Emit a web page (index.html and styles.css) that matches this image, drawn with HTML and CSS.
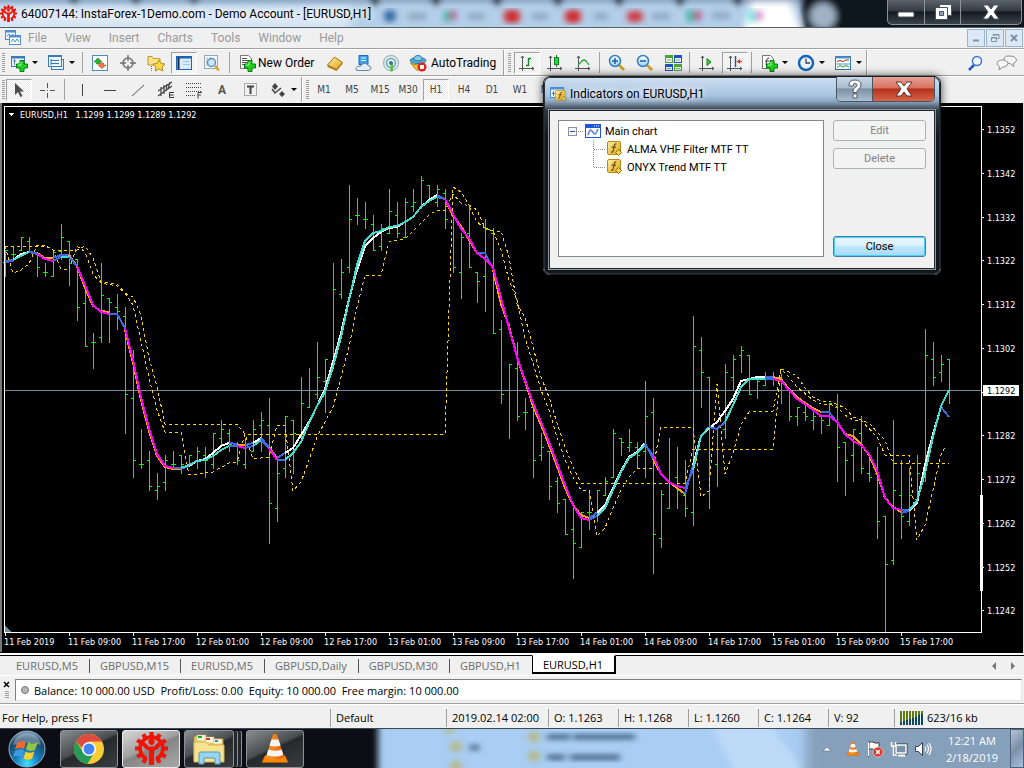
FILE: index.html
```
<!DOCTYPE html>
<html lang="en">

<head>
    <meta charset="UTF-8">
    <title>64007144: InstaForex-1Demo.com - Demo Account - [EURUSD,H1]</title>
    <link rel="stylesheet" href="styles.css">
</head>

<body>

    <!-- shared icons -->
    <svg class="defs" width="0" height="0">
        <defs>
            <filter id="soft"><feGaussianBlur stdDeviation="3" /></filter>
            <filter id="soft2"><feGaussianBlur stdDeviation="6" /></filter>
            <linearGradient id="gold" x1="0" y1="0" x2="1" y2="1">
                <stop offset="0" stop-color="#fff0a0" />
                <stop offset="1" stop-color="#dba21c" />
            </linearGradient>
            <linearGradient id="cone" x1="0" x2="1">
                <stop offset="0" stop-color="#ff9d2c" />
                <stop offset="1" stop-color="#e06000" />
            </linearGradient>
            <linearGradient id="lens" x1="0" y1="0" x2="0" y2="1">
                <stop offset="0" stop-color="#ffffff" />
                <stop offset="1" stop-color="#9fd0f2" />
            </linearGradient>
            <radialGradient id="orb" cx=".5" cy=".9" r=".9">
                <stop offset="0" stop-color="#3fe4ff" />
                <stop offset=".35" stop-color="#1b7fc0" />
                <stop offset=".75" stop-color="#1d4668" />
                <stop offset="1" stop-color="#7e9fb8" />
            </radialGradient>
            <symbol id="gear" viewBox="0 0 32 32">
                <g fill="none" stroke="#ee1506">
                    <path d="M16 0v5M16 27v5M0 16h5M27 16h5M8 2.100l2.500 4.400M24 2.100l-2.500 4.400M2.100 8l4.400 2.500M29.900 8l-4.400 2.500M2.100 24l4.400-2.500M29.900 24l-4.400-2.500M8 29.900l2.500-4.400M24 29.900l-2.500-4.400" stroke-width="4" />
                    <path d="M11.500 26A11 11 0 1 1 20.500 26" stroke-width="3.600" />
                </g>
                <circle cx="16" cy="9.500" r="3" fill="#ee1506" />
                <path d="M6 9q5 1 7 5h6q2-4 7-5-1 7-7.500 9V32h-5V18Q7 16 6 9z" fill="#ee1506" />
            </symbol>
            <symbol id="plus" viewBox="0 0 12 12">
                <path d="M4 .5h4V4h3.500v4H8v3.500H4V8H.5V4H4z" fill="#1fd21f" stroke="#087a10" />
                <path d="M5 2v3H2" stroke="#9cff8c" fill="none" />
            </symbol>
            <symbol id="func" viewBox="0 0 16 16">
                <rect x=".5" y=".5" width="13" height="13" rx="1.500" fill="url(#gold)" stroke="#b98a10" />
                <path d="M9.500 3Q7.500 2.500 7.200 5L6.300 9.500Q6 11.500 4 11M4.500 6.200h4.500" fill="none" stroke="#6b4c00" stroke-width="1.200" />
                <path d="M11.500 8.500l3 3-3 3-3-3z" fill="#f7d552" stroke="#8e6a08" />
            </symbol>
            <symbol id="vlc" viewBox="0 0 28 30">
                <path d="M4 22h20l3 7H1z" fill="#f58a0c" stroke="#c05a00" stroke-width=".6" />
                <path d="M12 1q2-1.500 4 0l7 23q-9 4-18 0z" fill="url(#cone)" />
                <path d="M10.500 6h7l2 6q-5 2-11 0z" fill="#f4f4f4" />
                <path d="M7.300 16q6.700 2.500 13.400 0l1.700 5.500q-8.400 3-16.800 0z" fill="#f4f4f4" />
            </symbol>
        </defs>
    </svg>

    <!-- title bar -->
    <header class="titlebar">
        <svg class="glass" viewBox="0 0 1024 27" preserveAspectRatio="none">
            <rect width="1024" height="27" fill="#b4cfe9" />
            <rect x="-10" y="6" width="360" height="26" fill="#d9e7f5" filter="url(#soft2)" />
            <g filter="url(#soft)">
                <path d="M-10-4h830v6H-10z" fill="#7e98b5" />
                <path d="M66-4l8 8 8-8zM128-4l8 8 8-8zM186-4l8 8 8-8zM367-4l8 10 8-10zM428-4l8 10 8-10zM489-4l8 10 8-10zM550-4l8 10 8-10zM611-4l8 10 8-10zM672-4l8 10 8-10zM730-4l8 10 8-10z" fill="#101820" />
                <path d="M800-8h260v60H806z" fill="#0d141b" />
                <path d="M742 34L752 2h38l12 32z" fill="#fff" />
                <g fill="#8498b0">
                    <path d="M408 14h18v5h-18zM468 14h17v5h-17zM532 14h16v5h-16zM594 14h14v5h-14zM652 14h18v5h-18zM712 13h18v5h-18z" />
                </g>
                <circle cx="823" cy="16" r="13" fill="#9fb3c6" />
            </g>
            <g filter="url(#soft)">
                <circle cx="390" cy="16" r="6" fill="#285b9e" />
                <path d="M444 11h6v11h-6z" fill="#35b3a4" />
                <path d="M450 11h6v9h-6z" fill="#b44c82" />
                <rect x="504" y="10" width="16" height="13" rx="5" fill="#d0282a" />
                <rect x="565" y="10" width="16" height="13" rx="5" fill="#d0282a" />
                <rect x="627" y="11" width="16" height="11" rx="5" fill="#cf343c" />
                <path d="M687 10h7v12h-7z" fill="#35b3a4" />
                <path d="M694 11h7v9h-7z" fill="#b8487c" />
                <path d="M749 10h6v12h-6z" fill="#4fe0dc" />
                <path d="M756 11h6v9h-6z" fill="#d470c8" />
            </g>
        </svg>
        <svg class="app-icon" width="17" height="17"><use href="#gear" /></svg>
        <h1>64007144: InstaForex-1Demo.com - Demo Account - [EURUSD,H1]</h1>
        <div class="window-btns">
            <button class="wb" aria-label="Minimize"><svg width="20" height="18"><rect x="2" y="9" width="16" height="5" rx="1" fill="#fff" stroke="#4a5360" /></svg></button>
            <button class="wb" aria-label="Restore"><svg width="20" height="18" fill="#fff" stroke="#4a5360"><path d="M6.500 1.500h12v11h-12z" /><path d="M2.500 4.500h12v12h-12z" /><path d="M6.500 8.500h4v4h-4z" fill="#8fa0b2" /></svg></button>
            <button class="wb wide" aria-label="Close"><svg width="20" height="18"><path d="M2 2h5l3 4 3-4h5l-5 7 5 7h-5l-3-4-3 4H2l5-7z" fill="#fff" stroke="#4a5360" /></svg></button>
        </div>
    </header>

    <!-- menu -->
    <nav class="menubar">
        <svg class="menu-icon" width="16" height="16" fill="none" stroke="#4f8fd0"><rect x=".5" y=".5" width="10" height="9" fill="#e8f4ff" /><path d="M0 1.500h11" stroke-width="2" /><path d="M2 6l2-2 2 3 2-3" /><rect x="4.500" y="5.500" width="11" height="9" fill="#fff" /><path d="M4 6.500h12" stroke-width="2" /><path d="M6 12l2-3 2 3 2-3 2 3" /></svg>
        <button>File</button>
        <button>View</button>
        <button>Insert</button>
        <button>Charts</button>
        <button>Tools</button>
        <button>Window</button>
        <button>Help</button>
        <div class="mdi-btns">
            <button aria-label="Minimize chart"><svg width="10" height="10"><path d="M2 7.500h6" stroke="#8291a3" stroke-width="2" /></svg></button>
            <button aria-label="Restore chart"><svg width="10" height="10" fill="none" stroke="#8291a3"><path d="M3 3V1.500h6v4H7.500M3 2h6M1.500 4.500h5v4h-5zM1 5h6" /></svg></button>
            <button aria-label="Close chart"><svg width="10" height="10"><path d="M2 2l6 6M8 2L2 8" stroke="#8291a3" stroke-width="2" /></svg></button>
        </div>
    </nav>

    <!-- standard toolbar -->
    <div class="toolbar">
        <div class="group first">
            <i class="grip"></i>
            <button class="tb drop" aria-label="New chart"><svg width="18" height="18"><rect x="1.500" y="2.500" width="13" height="10" fill="#eaf5ff" stroke="#3d7ab8" /><path d="M1 3.500h14" stroke="#3d7ab8" stroke-width="2" /><path d="M4.500 5v6M3 7h3" stroke="#5c88b4" /><use href="#plus" x="6" y="6" width="12" height="12" /></svg></button>
            <button class="tb drop" aria-label="Profiles"><svg width="18" height="18" fill="#eaf5ff" stroke="#3d7ab8"><rect x="4.500" y="5.500" width="12" height="10" /><rect x="1.500" y="1.500" width="13" height="11" /><path d="M1 2.500h14M4 5v6M4 9.500h8M4 6.500h8" fill="none" /></svg></button>
            <i class="sep"></i>
            <button class="tb" aria-label="Market Watch"><svg width="18" height="18"><rect x="1.500" y="1.500" width="15" height="15" fill="#fff" stroke="#4a8ac6" /><path d="M7 4l4 4H8.500v2h-3V8H3z" fill="#28b428" stroke="#0b7a1a" stroke-width=".6" /><path d="M11 14.500l4-3.500h-2.500V9h-3v2H7z" fill="#f47b4a" stroke="#b8431c" stroke-width=".6" /></svg></button>
            <button class="tb" aria-label="Data Window"><svg width="18" height="18" fill="none" stroke="#6f6f6f"><circle cx="9" cy="9" r="5" stroke-width="1.500" /><path d="M9 1v6M9 11v6M1 9h6M11 9h6" stroke-width="1.400" /></svg></button>
            <button class="tb" aria-label="Navigator"><svg width="18" height="18"><path d="M1 2.500h4l1.500 2H13V11H1z" fill="#f8e38c" stroke="#c19b25" /><path d="M4.500 12v5" stroke="#666" stroke-dasharray="1 1" /><path d="M12 6l2 3.500 4 .5-3 3 .8 4L12 15l-3.800 2 .8-4-3-3 4-.5z" fill="#ffd94a" stroke="#b98b16" /></svg></button>
            <button class="tb pressed" aria-label="Terminal"><svg width="18" height="18"><rect x="1.500" y="2.500" width="15" height="13" fill="#d8ecff" stroke="#1f62b0" /><path d="M1 3.500h16" stroke="#1f62b0" stroke-width="2" /><path d="M3.500 4v11" stroke="#123" stroke-width="2" /><path d="M8 7.500h7M8 10.500h7" stroke="#9cc6ee" /></svg></button>
            <button class="tb" aria-label="Strategy Tester"><svg width="18" height="18"><rect x="1.500" y="1.500" width="13" height="13" fill="#f5f9fc" stroke="#9aa7b2" /><path d="M4 3v9M7 3v4" stroke="#9ab" /><circle cx="8.500" cy="8.500" r="4" fill="#cfe6f7" stroke="#5a91c0" stroke-width="1.500" /><path d="M12 12l4 4.500" stroke="#d8a52a" stroke-width="2.500" /></svg></button>
            <i class="sep"></i>
            <button class="tb text order"><svg width="18" height="18"><path d="M2.500 1.500h8l3 3v10h-11z" fill="#fff" stroke="#777" /><path d="M4 4.500h5M4 6.500h7M4 8.500h7M4 10.500h5" stroke="#555" /><use href="#plus" x="6" y="6" width="12" height="12" /></svg>New Order</button>
            <button class="tb" aria-label="MetaEditor"><svg width="18" height="18"><path d="M1.500 11l7-8 8 5.500-6 7z" fill="url(#gold)" stroke="#a8700f" /><path d="M1.500 11v2l9 4 6-7V8.500l-6 6.500z" fill="#b8781a" /></svg></button>
            <button class="tb" aria-label="Virtual hosting"><svg width="18" height="18"><path d="M5 1.500h9v9H5z" fill="#3d9fe8" stroke="#1b6bb4" /><path d="M7 4h5M7 6.500h5" stroke="#e6f6ff" /><path d="M4 16.500h10.500q2.500-.5 2.500-2.500t-3-2.500q-1-2.500-4-2t-3 2.500q-4-.5-5 2t2 2.500z" fill="#e4ecf6" stroke="#6a86a8" /></svg></button>
            <button class="tb" aria-label="Signals"><svg width="18" height="18" fill="none"><circle cx="9" cy="9" r="7.500" stroke="#a2c0cf" stroke-width="1.500" /><circle cx="9" cy="9" r="4.500" stroke="#68a5a8" stroke-width="1.500" /><path d="M9 9h2v8q-2 1-3 0z" fill="#5fbf4c" /><circle cx="9" cy="9" r="2" fill="#2f7d8d" /></svg></button>
            <button class="tb text auto"><svg width="18" height="18"><path d="M1.500 9q7 3.500 14 0l-5 7h-3z" fill="#f2c43a" stroke="#b98512" /><ellipse cx="9" cy="6.500" rx="8" ry="3" fill="#55acd8" stroke="#26789f" /><path d="M4.500 6q.5-4.500 4.500-4.500T13.500 6q-4.500 2-9 0z" fill="#82caea" stroke="#26789f" /><circle cx="13" cy="13" r="4.500" fill="#e0241b" /><rect x="11" y="11" width="4" height="4" fill="#fff" /></svg>AutoTrading</button>
        </div>
        <div class="group charts">
            <i class="grip"></i>
            <button class="tb pressed" aria-label="Bar chart"><svg width="18" height="18" fill="none" stroke="#555"><path d="M4.500 2v15M1 14.500h15M3 4l1.500-2L6 4M14 13l2 1.500-2 1.500" /><path d="M10.500 4v8M8 11.500h2M11 4.500h2" stroke="#0a8a1c" stroke-width="1.400" /></svg></button>
            <button class="tb" aria-label="Candlesticks"><svg width="18" height="18" fill="none" stroke="#555"><path d="M4.500 2v15M1 14.500h15M3 4l1.500-2L6 4M14 13l2 1.500-2 1.500M10.500 1v12" /><rect x="8.500" y="3.500" width="4" height="7" fill="#2fd23c" stroke="#0a8a1c" /></svg></button>
            <button class="tb" aria-label="Line chart"><svg width="18" height="18" fill="none" stroke="#555"><path d="M4.500 2v15M1 14.500h15M3 4l1.500-2L6 4M14 13l2 1.500-2 1.500" /><path d="M4 11l4-4q2-2 4 0l3 4" stroke="#259b35" stroke-width="1.200" /></svg></button>
            <i class="sep"></i>
            <button class="tb" aria-label="Zoom in"><svg width="18" height="18"><path d="M11 11l5 5" stroke="#d3a227" stroke-width="3" /><circle cx="7" cy="7" r="5.500" fill="url(#lens)" stroke="#2f7fc4" stroke-width="1.500" /><path d="M4 7h6M7 4v6" stroke="#1b61a8" stroke-width="1.500" /></svg></button>
            <button class="tb" aria-label="Zoom out"><svg width="18" height="18"><path d="M11 11l5 5" stroke="#d3a227" stroke-width="3" /><circle cx="7" cy="7" r="5.500" fill="url(#lens)" stroke="#2f7fc4" stroke-width="1.500" /><path d="M4 7h6" stroke="#1b61a8" stroke-width="1.500" /></svg></button>
            <button class="tb" aria-label="Tile windows"><svg width="18" height="18"><path d="M1 1h8v8H1zM10 10h8v7h-8z" fill="#4aa52c" /><path d="M10 1h8v8h-8zM1 10h8v7H1z" fill="#1e50c0" /><path d="M2 4h6v4H2zM11 4h6v4h-6zM2 13h6v3H2zM11 13h6v3h-6z" fill="#e6f2ea" /><path d="M3 6h4M12 6h4M3 14.500h4M12 14.500h4" stroke="#999" /></svg></button>
            <i class="sep"></i>
            <button class="tb" aria-label="Auto scroll"><svg width="18" height="18" fill="none" stroke="#555"><path d="M4.500 2v15M1 14.500h15M3 4l1.500-2L6 4M14 13l2 1.500-2 1.500" /><path d="M9 4.500l4 3.500-4 3.500z" fill="#39d23e" stroke="#0a8a1c" /></svg></button>
            <button class="tb pressed" aria-label="Chart shift"><svg width="18" height="18" fill="none" stroke="#555"><path d="M4.500 2v15M1 14.500h15M3 4l1.500-2L6 4M14 13l2 1.500-2 1.500" /><path d="M9.500 2v11" stroke="#245a9c" stroke-width="1.500" /><path d="M16 7.500h-4" stroke="#d5411b" stroke-width="1.500" /><path d="M14 5v5l-3.500-2.500z" fill="#d5411b" stroke="none" /></svg></button>
            <i class="sep"></i>
            <button class="tb drop" aria-label="Indicators"><svg width="18" height="18"><path d="M2.500 1.500h8l3 3v10h-11z" fill="#fff" stroke="#777" /><path d="M9.500 4Q7 3.500 6.800 6L6 11M5 7h4" fill="none" stroke="#444" /><use href="#plus" x="6" y="6" width="12" height="12" /></svg></button>
            <button class="tb drop" aria-label="Periods"><svg width="18" height="18"><circle cx="9" cy="9" r="7" fill="#eaf6ff" stroke="#1565b8" stroke-width="2.500" /><path d="M9 4.500V9h4" fill="none" stroke="#345" stroke-width="1.300" /></svg></button>
            <button class="tb drop" aria-label="Templates"><svg width="18" height="18"><rect x="1.500" y="2.500" width="15" height="13" fill="#fff" stroke="#2f73b8" /><path d="M1 3.500h16" stroke="#4a90d0" stroke-width="2" /><path d="M1 10h16" stroke="#4a90d0" /><path d="M3 7.500l3-1 3 1 3-1.500h3" stroke="#a02c10" fill="none" /><path d="M3 13.500l3-2 3 1.500 3-1.500 3 1.500" stroke="#2a9630" fill="none" /></svg></button>
        </div>
        <div class="search">
            <button class="tb" aria-label="Search"><svg width="18" height="18"><path d="M7 11l-5 5" stroke="#2d55c8" stroke-width="2.500" /><circle cx="10" cy="7" r="4.500" fill="#eef6ff" stroke="#3a74d8" stroke-width="1.500" /></svg></button>
            <button class="tb" aria-label="Chat"><svg width="22" height="18" fill="#f6f6f6" stroke="#8d8d8d"><path d="M13 2q7 0 7.500 4-.5 3-3.500 3.500l1 3-4-3q-6 0-6-4t5-3.500z" /><path d="M6.500 6q5 0 5.500 3.500-.5 3.500-5 3.500l-4 3 .5-3.500Q1 11 1 9.500 1.500 6 6.500 6z" /></svg></button>
        </div>
    </div>

    <!-- line studies and periods -->
    <div class="toolbar second">
        <div class="group first">
            <i class="grip"></i>
            <button class="tb pressed" aria-label="Cursor"><svg width="18" height="18"><path d="M5 2v12l3-3 2.500 5 2-1L10 10.500h4z" fill="#4c4c4c" /></svg></button>
            <button class="tb" aria-label="Crosshair"><svg width="18" height="18" stroke="#555"><path d="M9.500 2v5M9.500 12v5M2 9.500h5M12 9.500h5M9 9.500h1" /></svg></button>
            <i class="sep"></i>
            <button class="tb" aria-label="Vertical line"><svg width="18" height="18" stroke="#444"><path d="M9.500 3v12" /></svg></button>
            <button class="tb" aria-label="Horizontal line"><svg width="18" height="18" stroke="#444"><path d="M3 9.500h12" /></svg></button>
            <button class="tb" aria-label="Trendline"><svg width="18" height="18" stroke="#555"><path d="M3 15L15 4" /></svg></button>
            <button class="tb" aria-label="Equidistant channel"><svg width="18" height="18" stroke="#444" fill="none"><path d="M1 10L15 1M1 15L15 5M4 6v9M7 4v9M10 3l-1 7M13 1l-2 7" stroke-width="1.200" /><path d="M17 11.500h-4.500v5H17M13 14h3.500" stroke="#333" /></svg></button>
            <button class="tb" aria-label="Fibonacci"><svg width="18" height="18" stroke="#444" fill="none"><path d="M1 2.500h15M1 6.500h15M1 10.500h15M1 14.500h9" stroke-dasharray="1 1" /><path d="M17 11.500h-4v6M13 14h3" /></svg></button>
            <button class="tb letter">A</button>
            <button class="tb" aria-label="Text label"><svg width="18" height="18" fill="none"><rect x="3.500" y="2.500" width="12" height="12" stroke="#666" stroke-dasharray="1 1" /><path d="M6 5.500h7M9.500 5v8" stroke="#444" stroke-width="2" /></svg></button>
            <button class="tb drop" aria-label="Arrows"><svg width="18" height="18" fill="#444"><path d="M6 2l3 3.500-3 3.500-3-3.500zM13 10l3 3-3 3-3-3z" /><path d="M3 8l3 4 6-5" fill="none" stroke="#444" stroke-width="1.500" /></svg></button>
        </div>
        <div class="group periods">
            <i class="grip"></i>
            <button class="tb">M1</button>
            <button class="tb">M5</button>
            <button class="tb">M15</button>
            <button class="tb">M30</button>
            <button class="tb pressed">H1</button>
            <button class="tb">H4</button>
            <button class="tb">D1</button>
            <button class="tb">W1</button>
            <button class="tb">MN</button>
        </div>
    </div>

    <!-- chart, drawn by the script below -->
    <main class="chart">
        <svg id="chart" viewBox="0 103 1024 551" preserveAspectRatio="xMinYMin meet">
            <path d="M1 103v549" stroke="#777" stroke-width="2" />
            <g id="bars"></g>
            <path d="M5 390.500H982" stroke="#778899" />
            <g id="bands"></g>
            <g id="slow"></g>
            <g id="fast"></g>
            <path d="M4.500 632.500v-526h977v526z" fill="none" stroke="#fff" />
            <path d="M5 626v6h6z" fill="#778899" />
            <rect x="980" y="495" width="3" height="96" fill="#fff" />
            <path d="M8 112.500h7l-3.500 4z" fill="#fff" />
            <text x="20" y="118">EURUSD,H1&#160;&#160; 1.1299 1.1299 1.1289 1.1292</text>
            <g id="axes"></g>
        </svg>
    </main>

    <!-- chart tabs -->
    <nav class="tabs">
        <button>EURUSD,M5</button>
        <button>GBPUSD,M15</button>
        <button>EURUSD,M5</button>
        <button>GBPUSD,Daily</button>
        <button>GBPUSD,M30</button>
        <button>GBPUSD,H1</button>
        <button class="active">EURUSD,H1</button>
        <span class="scroll">
            <button aria-label="Scroll left"><svg width="6" height="8"><path d="M5 0v8L1 4z" fill="#777" /></svg></button>
            <button aria-label="Scroll right"><svg width="6" height="8"><path d="M1 0v8l4-4z" fill="#777" /></svg></button>
        </span>
    </nav>

    <!-- terminal -->
    <section class="terminal">
        <div class="side"><button aria-label="Close terminal"><svg width="8" height="7"><path d="M1 1l5 5M6 1L1 6" stroke="#000" stroke-width="1.500" /></svg></button><i class="dots"></i></div>
        <p class="balance"><i class="bullet"></i>Balance: 10 000.00 USD&#160; Profit/Loss: 0.00&#160; Equity: 10 000.00&#160; Free margin: 10 000.00</p>
    </section>

    <footer class="status">
        <span class="help">For Help, press F1</span>
        <span class="profile">Default</span>
        <span class="time">2019.02.14 02:00</span>
        <span class="price">O: 1.1263</span>
        <span class="price">H: 1.1268</span>
        <span class="price">L: 1.1260</span>
        <span class="price">C: 1.1264</span>
        <span class="vol">V: 92</span>
        <span class="net"><svg width="24" height="14" stroke-width="2"><path d="M1 0v14M4 0v14M7 0v14M10 0v14M13 0v14M16 0v14M19 0v14M22 0v14" stroke="#5e7a10" /><path d="M1 11v3M4 10v4M7 9v5M10 8v6M13 7v7M16 6v8M19 4v10M22 3v11" stroke="#0d4766" /></svg>623/16 kb</span>
    </footer>

    <!-- taskbar -->
    <div class="taskbar">
        <svg class="glass" viewBox="0 0 1024 40" preserveAspectRatio="none">
            <rect width="1024" height="40" fill="#a9cdf3" />
            <path d="M710-5h60l35 50h-70z" fill="#bcdaf8" filter="url(#soft)" />
            <rect x="-20" y="-20" width="398" height="80" fill="#090d13" filter="url(#soft)" />
            <rect x="806" y="-20" width="240" height="80" fill="#869fba" filter="url(#soft2)" />
            <g filter="url(#soft)" fill="#b9b573" opacity=".8">
                <circle cx="449" cy="0" r="5" />
                <circle cx="456" cy="18" r="6" />
                <circle cx="456" cy="38" r="6" />
                <circle cx="534" cy="8" r="6" />
                <circle cx="534" cy="28" r="6" />
            </g>
            <g filter="url(#soft)" fill="#51708f">
                <path d="M470 16h9v6h-9zM547 5h23v6h-23zM573 5h62v6h-62zM547 26h18v6h-18zM570 26h50v6h-50z" />
            </g>
        </svg>
        <button class="start" aria-label="Start"><svg width="38" height="38" viewBox="0 0 38 38"><circle cx="19" cy="19" r="18" fill="url(#orb)" stroke="#8cb6cf" /><path d="M5 15Q8 3 19 3t14 12q-14-5-28 0z" fill="#fff" opacity=".3" /><path d="M9 13q4-3 9-1l-2 7q-4-2-9 0z" fill="#ef6a2a" /><path d="M20 12q5 3 10 0l-3 8q-5 2-9-.5z" fill="#8fc63c" /><path d="M7 21q5-3 9-.5l-2 7q-4-3-9-.5z" fill="#3b9ce0" /><path d="M17.500 21.500q4 2.500 9 0l-2.500 7q-4 2.500-8.500 0z" fill="#fbd02d" /></svg></button>
        <button class="task" aria-label="Google Chrome"><svg width="32" height="32" viewBox="0 0 32 32"><circle cx="16" cy="16" r="15" fill="#f9cc35" /><path d="M3 8.500A15 15 0 0 1 29 8.500H16L9 15z" fill="#dd4b3e" /><path d="M3 8.500A15 15 0 0 0 14.500 31L21 20l-10 0z" fill="#279a57" /><circle cx="16" cy="16" r="7" fill="#fff" /><circle cx="16" cy="16" r="5.500" fill="#4284f3" /></svg></button>
        <button class="task current" aria-label="MetaTrader"><svg width="33" height="33"><use href="#gear" /></svg></button>
        <button class="task stack" aria-label="Explorer"><svg width="34" height="32" viewBox="0 0 34 32"><path d="M2 5q0-2 2-2h8l2 3h17v21H2z" fill="#e8cd72" stroke="#b59537" /><path d="M5 2h9v6H5zM13 4h9v6h-9zM21 6h9v5h-9z" fill="#fbf6dc" stroke="#c7b070" stroke-width=".5" /><path d="M6 3h4v2H6z" fill="#1da838" /><path d="M14 5h4v2h-4z" fill="#cf3a22" /><path d="M23 7h3v2h-3z" fill="#2b8fe0" /><path d="M2 9h12l3 3h15v17H2z" fill="#f8e391" stroke="#d6b44c" /><path d="M7 31V21q0-2 2-2h17q2 0 2 2v10h-5v-6H12v6z" fill="#9bd4ee" stroke="#4b9cc6" /></svg></button>
        <button class="task" aria-label="VLC"><svg width="28" height="31"><use href="#vlc" /></svg></button>
        <div class="tray">
            <button aria-label="Hidden icons"><svg width="10" height="6"><path d="M1 5l4-4 4 4z" fill="#fff" stroke="#4a5c70" stroke-width=".5" /></svg></button>
            <button aria-label="VLC"><svg width="14" height="17"><use href="#vlc" /></svg></button>
            <button aria-label="Action Center"><svg width="18" height="18"><path d="M2.500 1v16M3 2.500q3-1.500 5 0t5 0v7q-3 1.500-5 0t-5 0z" fill="#fff" stroke="#333d48" /><path d="M2.500 2v14" stroke="#fff" /><circle cx="12" cy="12" r="5" fill="#df3325" stroke="#fff" stroke-width=".5" /><path d="M10 10l4 4M14 10l-4 4" stroke="#fff" stroke-width="1.500" /></svg></button>
            <button aria-label="Network"><svg width="18" height="18" fill="none" stroke="#fff"><rect x="6" y="5" width="10" height="8" fill="#56687c" stroke="#2b3947" stroke-width="3" /><rect x="6" y="5" width="10" height="8" fill="#7c92a9" stroke-width="1.500" /><path d="M8 15.500h7" stroke-width="2" /><path d="M1.500 2v4h4V2M3.500 6v9H7" stroke-width="1.500" /></svg></button>
            <button aria-label="Volume"><svg width="18" height="18" fill="none" stroke="#fff"><path d="M1.500 6.500h3l4-4v13l-4-4h-3z" fill="#fff" stroke="#39444f" /><path d="M11 6.500q1.500 2.500 0 5M13 4.500q3 4.500 0 9M15 3q4 6 0 12" stroke-width="1.200" /></svg></button>
        </div>
        <button class="clock">12:21 AM<br>2/18/2019</button>
        <button class="show-desktop" aria-label="Show desktop"></button>
    </div>

    <!-- indicators dialog -->
    <div class="dialog" role="dialog" aria-labelledby="dlg-title">
        <div class="dlg-head">
            <svg width="17" height="16"><rect x=".5" y="1.500" width="13" height="10" fill="#eff8ff" stroke="#4c8fc9" /><path d="M0 2.500h14" stroke="#4c8fc9" stroke-width="2" /><path d="M3.500 5v5M2 7.500h3" stroke="#678" /><use href="#func" x="5" y="4" width="12" height="12" /></svg>
            <h2 id="dlg-title">Indicators on EURUSD,H1</h2>
            <div class="dlg-btns">
                <button class="q" aria-label="Help"><svg width="16" height="20"><path d="M2 6q0-5 6-5t6 5q0 3-3 4.500-1 .5-1 3H6q0-4 2-5 2-1 2-2.500T8 4.500 6 7H2zM6 15h4v4H6z" fill="#fff" stroke="#515b66" /></svg></button>
                <button class="x" aria-label="Close dialog"><svg width="20" height="18"><path d="M2 2h5l3 4 3-4h5l-5 7 5 7h-5l-3-4-3 4H2l5-7z" fill="#fff" stroke="#5b3030" /></svg></button>
            </div>
        </div>
        <div class="dlg-body">
            <ul class="tree">
                <li class="root"><svg width="16" height="18"><rect x=".5" y="5.500" width="8" height="8" fill="#f4f8fc" stroke="#919191" /><path d="M2 9.500h5" stroke="#2a4fae" /><path d="M10 9.500h6" stroke="#888" stroke-dasharray="1 1" /></svg><svg width="16" height="14"><rect x=".5" y=".5" width="15" height="13" fill="#fff" stroke="#1e56d8" /><path d="M0 2h16" stroke="#1e56d8" stroke-width="4" /><path d="M9 2h1M11 2h1M13 2h1" stroke="#fff" /><path d="M3 11q2-7 4-4t3 3 3-5" fill="none" stroke="#4d7ce0" stroke-width="1.500" /></svg>Main chart</li>
                <li><svg width="12" height="18"><path d="M.5 0v18M1 9.500h11" fill="none" stroke="#888" stroke-dasharray="1 1" /></svg><svg width="16" height="16"><use href="#func" /></svg>ALMA VHF Filter MTF TT</li>
                <li><svg width="12" height="18"><path d="M.5 0v10M1 9.500h11" fill="none" stroke="#888" stroke-dasharray="1 1" /></svg><svg width="16" height="16"><use href="#func" /></svg>ONYX Trend MTF TT</li>
            </ul>
            <div class="dlg-side">
                <button disabled>Edit</button>
                <button disabled>Delete</button>
                <button class="default">Close</button>
            </div>
        </div>
    </div>

    <script type="text/javascript">
        // one bar every 8px: open, high, low, close
        var bars = [
            [262, 250, 277, 250], [254, 246, 258, 254], [250, 237, 250, 237], [241, 237, 253, 251], [253, 253, 277, 267], [272, 263, 277, 272], [276, 250, 277, 252], [251, 224, 260, 237],
            [241, 241, 286, 263], [259, 259, 321, 307], [303, 287, 346, 346], [342, 333, 369, 342], [337, 263, 343, 295], [298, 298, 343, 302], [307, 294, 330, 311], [316, 307, 434, 394],
            [398, 350, 478, 460], [464, 429, 469, 464], [460, 451, 491, 486], [490, 473, 500, 486], [482, 455, 491, 460], [464, 451, 467, 464], [455, 455, 474, 464], [464, 455, 465, 455],
            [460, 447, 469, 451], [455, 447, 478, 460], [464, 433, 469, 433], [438, 420, 447, 429], [433, 429, 452, 444], [444, 442, 465, 460], [464, 438, 469, 445], [451, 420, 452, 429],
            [425, 412, 452, 420], [425, 398, 544, 503], [508, 457, 522, 473], [468, 416, 478, 416], [420, 420, 474, 433], [434, 377, 438, 403], [407, 368, 407, 390], [394, 342, 399, 377],
            [381, 359, 413, 359], [364, 263, 365, 289], [294, 259, 299, 272], [267, 185, 273, 219], [215, 198, 225, 215], [219, 202, 229, 219], [224, 215, 250, 250], [246, 224, 251, 228],
            [233, 189, 234, 211], [215, 202, 238, 233], [237, 198, 238, 202], [206, 189, 212, 202], [208, 176, 208, 180], [185, 185, 200, 198], [202, 185, 207, 189], [193, 189, 229, 219],
            [215, 215, 273, 267], [272, 233, 299, 237], [233, 206, 267, 267], [272, 272, 303, 281], [276, 219, 312, 229], [233, 228, 333, 333], [329, 320, 404, 394], [390, 364, 439, 364],
            [368, 342, 421, 416], [412, 398, 430, 412], [407, 403, 478, 460], [455, 433, 461, 447], [451, 451, 500, 486], [481, 477, 513, 503], [499, 499, 534, 534], [529, 503, 579, 543],
            [547, 512, 547, 512], [512, 493, 530, 512], [512, 490, 522, 490], [495, 477, 495, 481], [477, 429, 477, 433], [438, 438, 456, 442], [447, 429, 452, 442], [447, 442, 469, 455],
            [451, 381, 478, 416], [412, 398, 574, 534], [538, 490, 548, 494], [508, 438, 509, 482], [477, 447, 509, 490], [495, 460, 517, 508], [512, 316, 526, 346], [350, 337, 408, 372],
            [377, 377, 509, 460], [464, 427, 487, 427], [429, 364, 439, 372], [377, 355, 391, 359], [355, 346, 373, 350], [355, 355, 394, 394], [390, 380, 399, 381], [385, 372, 386, 377],
            [377, 372, 386, 377], [377, 374, 404, 390], [390, 390, 421, 416], [416, 407, 426, 407], [412, 403, 421, 416], [420, 410, 430, 416], [416, 415, 434, 420], [425, 403, 426, 403],
            [407, 394, 482, 447], [442, 442, 496, 460], [455, 429, 482, 429], [433, 416, 474, 468], [473, 453, 482, 477], [473, 447, 539, 521], [516, 516, 632, 564], [560, 420, 565, 490],
            [495, 460, 539, 516], [521, 468, 526, 495], [499, 455, 500, 473], [473, 329, 482, 355], [359, 342, 386, 377], [372, 355, 382, 364], [359, 359, 404, 390]
        ];

        // colour, first x, values
        var W = '#ffffff', O = '#ffa500', B = '#4169e1', M = '#ff00ff', T = '#40e0d0';
        var fast = [
            [B, 5, [261, 260]], [T, 13, [260, 256, 252]], [B, 29, [252, 254]], [M, 37, [254, 259, 261]], [B, 53, [261, 257]], [T, 61, [257, 257]],
            [B, 69, [257, 266]], [M, 77, [266, 285, 305, 312, 314]], [B, 109, [314, 314, 328]], [M, 125, [328, 360, 397, 428, 454, 466, 468]], [B, 173, [468, 468]],
            [T, 181, [468, 465, 461, 460, 456, 450, 446]], [B, 229, [446, 446]], [M, 237, [446, 448]], [B, 245, [448, 446]], [T, 253, [446, 440]], [B, 261, [440, 448]],
            [M, 269, [448, 460]], [B, 277, [460, 460]],
            [T, 285, [460, 453, 442, 423, 406, 392, 367, 337, 300, 265, 241, 233, 231, 227, 226, 222, 217, 207, 201, 197]], [B, 437, [197, 199]],
            [M, 445, [199, 214, 229, 238, 253, 259, 267, 298, 328, 357, 380, 403, 422, 442, 463, 485, 505, 518, 520]], [B, 589, [520, 516]],
            [T, 597, [516, 508, 490, 472, 458, 453, 445]], [B, 645, [445, 455]], [M, 653, [455, 474, 482, 486, 488]], [B, 685, [488, 470]], [T, 693, [470, 436, 427]],
            [B, 709, [427, 429, 422]], [T, 725, [422, 405, 387, 379, 379, 379]], [B, 765, [379, 379]],
            [M, 773, [379, 381, 390, 399, 404, 410, 416, 416, 422, 434, 441, 445, 454, 470, 498, 508, 510]], [B, 901, [510, 510]], [T, 909, [510, 501, 473, 437, 406, 390]]
        ];
        var slow = [
            [B, 5, [262, 261]], [W, 13, [260, 254, 252]], [B, 29, [252, 253]], [O, 37, [253, 258, 258]], [B, 53, [258, 255, 255]], [O, 69, [255, 266, 288, 306, 311, 312]],
            [B, 109, [314, 314, 328]], [O, 125, [330, 363, 400, 431, 456, 467, 469, 469]], [B, 181, [469, 466]], [W, 189, [466, 461, 459, 453, 446, 443]], [B, 229, [443, 444]],
            [O, 237, [445, 445]], [B, 245, [445, 443]], [W, 253, [443, 438]], [B, 261, [438, 447]], [O, 269, [447, 458]], [B, 277, [458, 453]],
            [W, 285, [453, 448, 435, 422, 406, 389, 362, 333, 299, 270, 246, 238, 232, 228, 227, 222, 217, 207, 200, 195]], [B, 437, [195, 199]],
            [O, 445, [199, 216, 226, 240, 253]], [B, 477, [253, 253, 269]], [O, 493, [270, 304, 326, 357, 381, 406, 425, 445, 466, 488, 505, 515, 518]], [B, 589, [518, 513]],
            [W, 597, [513, 505, 488, 471, 457, 452, 443]], [B, 645, [443, 459]], [O, 653, [459, 474, 482, 488, 494]], [B, 685, [494, 465]],
            [W, 693, [465, 436, 428, 422, 411, 399, 381, 379, 377, 377]], [B, 765, [377, 377]], [O, 773, [377, 379, 389, 397, 403, 408, 412]], [B, 821, [412, 412, 422]],
            [O, 837, [422, 434, 436, 444, 455, 473, 498, 507, 512]], [B, 901, [513, 511]], [W, 909, [511, 503, 465, 434, 407]], [B, 941, [407, 417]]
        ];

        // dashed bands as plain point lists
        var bands = [
            '5,246 45,246 53,250 77,250 85,246 93,258 101,282 117,284 125,293 133,297 141,315 149,358 157,387 165,424 237,424 245,434 445,434 453,187 461,192 469,205 477,210 485,228 493,231 501,231 509,257 517,304 525,317 533,347 541,377 549,397 557,423 565,447 573,467 581,483 685,483 693,449 773,449 781,369 789,372 797,376 805,388 813,397 821,401 829,401 845,408 853,417 861,420 869,423 877,432 885,440 893,463 949,463',
            '5,246 13,273 21,270 29,264 37,245 45,245 53,250 61,269 69,269 77,246 85,252 93,274 101,283 117,286 125,293 133,305 141,341 149,378 157,410 165,432 181,432 189,475 213,472 229,463 237,462 245,434 253,459 269,457 277,425 285,425 293,491 301,482 309,460 317,437 333,407 341,377 349,347 357,307 365,275 381,275 389,242 405,239 429,215 437,210 445,210 453,194 461,203 469,206 477,222 485,228 493,231 501,250 509,280 517,300 525,338 533,363 541,390 549,410 557,437 565,460 573,477 581,490 589,490 597,536 605,528 613,508 621,490 629,477 637,469 653,468 661,427 693,427 701,497 709,491 717,384 725,474 733,453 741,425 749,412 773,411 781,369 789,377 797,387 813,400 821,404 829,404 837,407 845,415 853,420 861,420 877,437 885,455 909,455 917,540 925,525 933,490 941,455 946,445'
        ];

        function add(parent, name, attrs, text) {
            var el = document.createElementNS('http://www.w3.org/2000/svg', name);
            for (var key in attrs) {
                el.setAttribute(key, attrs[key]);
            }
            if (text) {
                el.textContent = text;
            }
            document.getElementById(parent).appendChild(el);
        }

        // bars
        var d = '';
        for (var i = 0; i < bars.length; i++) {
            var x = 5 + i * 8;
            var b = bars[i];
            d += 'M' + (x + 0.5) + ' ' + b[1] + 'V' + b[2];
            d += 'M' + (x - 2) + ' ' + (b[0] + 0.5) + 'h3M' + x + ' ' + (b[3] + 0.5) + 'h3';
        }
        add('bars', 'path', { d: d });

        // bands
        for (var i = 0; i < bands.length; i++) {
            add('bands', 'polyline', { points: bands[i] });
        }

        // averages
        function drawLine(parent, parts) {
            for (var i = 0; i < parts.length; i++) {
                var points = '';
                for (var j = 0; j < parts[i][2].length; j++) {
                    points += (parts[i][1] + j * 8) + ',' + parts[i][2][j] + ' ';
                }
                add(parent, 'polyline', { points: points, stroke: parts[i][0] });
            }
        }
        drawLine('slow', slow);
        drawLine('fast', fast);

        // price scale
        var prices = ['1.1352', '1.1342', '1.1332', '1.1322', '1.1312', '1.1302', '', '1.1282', '1.1272', '1.1262', '1.1252', '1.1242'];
        for (var i = 0; i < prices.length; i++) {
            var y = Math.round(129 + i * 43.75);
            add('axes', 'path', { d: 'M982 ' + (y + 0.5) + 'h2' });
            add('axes', 'text', { x: 987, y: y + 4 }, prices[i]);
        }
        add('axes', 'rect', { x: 983, y: 385, width: 36, height: 11 });
        add('axes', 'text', { x: 987, y: 394, 'class': 'now' }, '1.1292');

        // time scale
        var times = ['11 Feb 2019', '11 Feb 09:00', '11 Feb 17:00', '12 Feb 01:00', '12 Feb 09:00', '12 Feb 17:00', '13 Feb 01:00', '13 Feb 09:00', '13 Feb 17:00', '14 Feb 01:00', '14 Feb 09:00', '14 Feb 17:00', '15 Feb 01:00', '15 Feb 09:00', '15 Feb 17:00'];
        for (var i = 0; i < times.length; i++) {
            add('axes', 'path', { d: 'M' + (5.5 + i * 64) + ' 633v3' });
            add('axes', 'text', { x: 4 + i * 64, y: 645 }, times[i]);
        }
    </script>
</body>

</html>
```
FILE: styles.css
```
* {
    box-sizing: border-box;
}

body {
    margin: 0;
    height: 100vh;
    display: flex;
    flex-direction: column;
    overflow: hidden;
    position: relative;
    background: #f0f0f0;
    font-family: Roboto, "Open Sans", sans-serif;
    font-size: 12px;
    color: #000;
}

button {
    margin: 0;
    padding: 0;
    border: 0;
    background: none;
    font: inherit;
    color: inherit;
}

svg {
    display: block;
    flex: none;
}

h1,
h2,
p,
ul {
    margin: 0;
    padding: 0;
    font-size: inherit;
    font-weight: normal;
    list-style: none;
}

.defs {
    position: absolute;
}

/* title bar */
.titlebar {
    position: relative;
    display: flex;
    align-items: center;
    height: 27px;
    flex: none;
    overflow: hidden;
}

.glass {
    position: absolute;
    top: 0;
    left: 0;
    width: 100%;
    height: 100%;
}

.app-icon,
.titlebar h1,
.window-btns {
    position: relative;
}

.titlebar h1 {
    margin-left: 4px;
    flex: 1;
    white-space: nowrap;
    text-shadow: 0 0 6px #fff, 0 0 6px #fff;
}

.window-btns {
    display: flex;
    align-self: flex-start;
    height: 25px;
    margin-right: 2px;
    border: 1px solid #8a929b;
    border-top: 0;
    border-radius: 0 0 5px 5px;
    background: linear-gradient(#5b636d, #343b44 45%, #141a21 50%, #39424c);
}

.wb {
    display: flex;
    align-items: center;
    justify-content: center;
    width: 36px;
}

.wb + .wb {
    border-left: 1px solid #8a929b;
}

.wb.wide {
    width: 61px;
}

/* menu */
.menubar {
    display: flex;
    align-items: center;
    height: 22px;
    flex: none;
    padding: 0 1px 0 5px;
    border-top: 1px solid #555f69;
    border-bottom: 1px solid #a0a0a0;
    color: #9a9a9a;
}

.menu-icon {
    margin-right: -2px;
}

.menubar > button {
    padding: 0 9px;
}

.mdi-btns {
    display: flex;
    gap: 1px;
    margin-left: auto;
}

.mdi-btns button {
    display: flex;
    align-items: center;
    justify-content: center;
    width: 18px;
    height: 18px;
    border: 1px solid #9db2c8;
    background: #dbe8f6;
}

/* toolbars */
.toolbar {
    display: flex;
    height: 27px;
    flex: none;
    border-top: 1px solid #fff;
    border-bottom: 1px solid #a0a0a0;
}

.toolbar.second {
    border-bottom-color: #f0f0f0;
}

.group {
    display: flex;
    align-items: center;
    border-right: 1px solid #a0a0a0;
    box-shadow: 1px 0 0 #fff;
}

.group .grip {
    width: 3px;
    height: 19px;
    margin: 0 2px 0 4px;
    background: repeating-linear-gradient(#a0a0a0 0 1px, #f0f0f0 1px 2px);
}

.group.first .grip {
    margin: 0 0 0 2px;
}

.group.periods .grip {
    margin-right: 1px;
}

.sep {
    width: 1px;
    height: 21px;
    margin: 0 3px;
    background: #a0a0a0;
}

.charts .sep {
    margin-left: 2px;
}

.tb {
    display: flex;
    align-items: center;
    justify-content: center;
    width: 28px;
    height: 23px;
}

.tb.pressed {
    width: 26px;
    height: 22px;
    margin: 0 1px;
    border: 1px solid #fff;
    border-top-color: #a0a0a0;
    border-left-color: #a0a0a0;
    background: repeating-conic-gradient(#fff 0 25%, #eaeaea 0 50%) 0 0 / 2px 2px;
}

.tb.drop {
    width: 37px;
    justify-content: flex-start;
    padding-left: 5px;
    gap: 4px;
}

.tb.drop::after {
    content: "";
    border: 3px solid transparent;
    border-top-color: #000;
    border-bottom: 0;
}

.tb.text {
    justify-content: flex-start;
    padding-left: 5px;
    gap: 2px;
    white-space: nowrap;
}

.tb.order {
    width: 88px;
}

.tb.auto {
    width: 98px;
    padding-left: 4px;
    gap: 4px;
}

.letter {
    font-weight: bold;
    color: #555;
}

.periods {
    font-family: "DejaVu Sans Condensed", "DejaVu Sans", sans-serif;
    font-size: 10px;
    color: #444;
}

.search {
    display: flex;
    align-items: center;
    gap: 3px;
    margin-left: auto;
    padding-right: 3px;
}

/* chart */
.chart {
    flex: 1;
    min-height: 0;
    background: #000;
    border-right: 1px solid #e3e3e3;
    border-bottom: 2px solid #fff;
}

#chart {
    width: 100vw;
    max-width: none;
    font-family: "DejaVu Sans Condensed", "DejaVu Sans", sans-serif;
    font-size: 9px;
    fill: #fff;
    shape-rendering: crispEdges;
}

#bars path {
    stroke: #00ff00;
}

#bands polyline {
    fill: none;
    stroke: #ffd700;
    stroke-dasharray: 3 3;
}

#slow polyline,
#fast polyline {
    fill: none;
    stroke-width: 2;
    stroke-linejoin: round;
}

#axes path {
    stroke: #fff;
}

#axes .now {
    fill: #000;
}

/* chart tabs */
.tabs,
.terminal,
.status,
.clock {
    font-family: "Open Sans", "Noto Sans", sans-serif;
    font-size: 11px;
}

.tabs {
    display: flex;
    align-items: center;
    height: 21px;
    flex: none;
    padding-left: 6px;
    border-top: 1px solid #000;
    border-bottom: 1px solid #fff;
    color: #6d6d6d;
}

.tabs > button {
    height: 14px;
    padding: 0 11px 0 10px;
    line-height: 14px;
    border-right: 1px solid #555;
}

.tabs > button:nth-child(6) {
    border-right: 0;
}

.tabs .active {
    align-self: flex-start;
    height: 19px;
    margin-top: -1px;
    line-height: 18px;
    border: 1px solid #000;
    border-top-color: #fff;
    border-width: 1px 2px 2px 1px;
    background: #fff;
    color: #000;
}

.scroll {
    display: flex;
    gap: 13px;
    margin-left: auto;
    padding-right: 8px;
}

/* terminal */
.terminal {
    display: flex;
    height: 28px;
    flex: none;
    padding: 3px 2px 2px 0;
    border-bottom: 1px solid #a0a0a0;
}

.side {
    width: 15px;
    padding: 2px 0 0 3px;
}

.side button {
    display: block;
}

.dots {
    display: block;
    width: 4px;
    height: 8px;
    margin: 3px 0 0 2px;
    background: repeating-linear-gradient(#a0a0a0 0 1px, #f0f0f0 1px 2px);
}

.balance {
    display: flex;
    align-items: center;
    flex: 1;
    padding-left: 5px;
    border: 1px solid #e3e3e3;
    border-top-color: #7f7f7f;
    border-left-color: #7f7f7f;
    background: #fff;
    white-space: nowrap;
}

.bullet {
    width: 8px;
    height: 8px;
    margin-right: 5px;
    border: 1px solid #777;
    border-radius: 50%;
    background: #b5b5b5;
}

/* status bar */
.status {
    display: flex;
    align-items: center;
    height: 24px;
    flex: none;
    padding-top: 2px;
    border-top: 1px solid #fff;
    white-space: nowrap;
}

.status span {
    height: 18px;
    line-height: 18px;
    padding-left: 5px;
    border-right: 1px solid #a0a0a0;
}

.status .help {
    width: 331px;
    padding-left: 2px;
}

.status .profile {
    width: 116px;
}

.status .time {
    width: 102px;
}

.status .price {
    width: 70px;
}

.status .vol {
    width: 66px;
}

.status .net {
    display: flex;
    align-items: center;
    gap: 3px;
    flex: 1;
    border-right: 0;
}

/* taskbar */
.taskbar {
    position: relative;
    display: flex;
    align-items: center;
    height: 40px;
    flex: none;
    border-top: 1px solid #3c4a58;
    overflow: hidden;
}

.taskbar > button,
.tray {
    position: relative;
}

.start {
    margin: 0 14px 0 8px;
}

.task {
    display: flex;
    align-items: center;
    justify-content: center;
    width: 58px;
    height: 38px;
    margin-right: 4px;
    border: 1px solid #8e9296;
    border-radius: 3px;
    background: linear-gradient(155deg, #8a8d90, #4a4d50 45%, #26292c 50%, #3b3e41);
}

.task.current {
    border-color: #e8e8e8;
    background: linear-gradient(155deg, #d8d8d8, #a0a0a0 45%, #858585 50%, #a8a8a8);
}

.task.stack {
    width: 50px;
    margin-right: 12px;
    box-shadow: 4px 0 0 -1px #24272a, 5px 0 0 -1px #8e9296, 8px 0 0 -1px #24272a, 9px 0 0 -1px #8e9296;
}

.tray {
    display: flex;
    align-items: center;
    gap: 6px;
    margin-left: auto;
}

.tray button:first-child {
    margin-right: 8px;
}

.clock {
    width: 66px;
    margin: 0 5px 0 7px;
    line-height: 17px;
    color: #fff;
}

.show-desktop {
    width: 14px;
    height: 39px;
    border: 1px solid #4d6279;
    background: linear-gradient(135deg, #b4c6d8, #7990a8 50%, #a9c3dc);
}

/* indicators dialog */
.dialog {
    position: absolute;
    top: 76px;
    left: 543px;
    width: 398px;
    padding: 0 5px 5px;
    border: 1px solid #e2e8ec;
    outline: 1px solid #1a1f24;
    outline-offset: -1px;
    border-radius: 7px;
    background: linear-gradient(#cfe0f1, #a9c5e2 18px, #8fa9c2 24px, #2c3640 34px, #10161b 60px);
    box-shadow: 0 0 0 1px #2a2f34 inset, 0 0 10px rgba(0, 0, 0, 0.7);
}

.dlg-head {
    display: flex;
    align-items: center;
    height: 33px;
    padding-left: 1px;
}

.dlg-head h2 {
    flex: 1;
    margin-left: 3px;
    text-shadow: 0 0 7px #fff, 0 0 7px #fff;
}

.dlg-btns {
    display: flex;
    align-self: flex-start;
    height: 25px;
    border: 1px solid #4b5560;
    border-top: 0;
    border-radius: 0 0 5px 5px;
    overflow: hidden;
}

.dlg-btns button {
    display: flex;
    align-items: center;
    justify-content: center;
}

.q {
    width: 36px;
    border-right: 1px solid #4b5560;
    background: linear-gradient(#c8d8e8, #a9bccd 45%, #7d90a3 50%, #a9bfd4);
}

.x {
    width: 61px;
    background: linear-gradient(#e5a095, #d8735f 45%, #b5301b 50%, #d4654a);
}

.dlg-body {
    display: flex;
    gap: 9px;
    height: 159px;
    padding: 9px 8px 11px;
    border: 1px solid #20262b;
    outline: 1px solid #8f989f;
    background: #f0f0f0;
    font-size: 11px;
}

.tree {
    flex: 1;
    padding: 1px 0 0 9px;
    border: 1px solid #828790;
    background: #fff;
}

.tree li {
    display: flex;
    align-items: center;
    gap: 4px;
    height: 18px;
    padding-left: 25px;
    white-space: nowrap;
}

.tree li > svg:first-child {
    margin-right: -2px;
}

.tree li.root {
    padding-left: 0;
}

.tree li.root > svg:first-child {
    margin-right: -3px;
}

.dlg-side {
    display: flex;
    flex-direction: column;
    gap: 7px;
    width: 93px;
}

.dlg-side button {
    height: 21px;
    border: 1px solid #707070;
    border-radius: 3px;
    background: linear-gradient(#f2f2f2, #ebebeb 50%, #dddddd 50%, #cfcfcf);
}

.dlg-side button:disabled {
    border-color: #adb2b5;
    background: #f4f4f4;
    color: #838383;
}

.dlg-side .default {
    margin-top: auto;
    border-color: #3c7fb1;
    box-shadow: 0 0 0 1px #48d0f8 inset;
    background: linear-gradient(#eaf6fd, #d9f0fc 50%, #bee6fd 50%, #a7d9f5);
}
```
